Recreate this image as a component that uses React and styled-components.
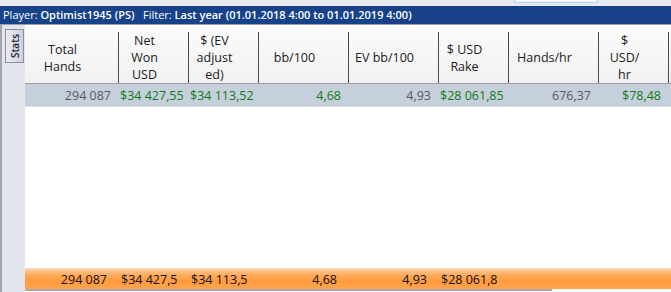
import React from 'react';
import styled, { createGlobalStyle } from 'styled-components';

const GlobalStyle = createGlobalStyle`
  html, body { margin: 0; padding: 0; background: #ffffff; }
  body { font-family: "Open Sans", "Noto Sans", sans-serif; }
`;

const columns = [
  { key: 'hands', label: ['Total', 'Hands'], width: 94 },
  { key: 'net', label: ['Net', 'Won', 'USD'], width: 70 },
  { key: 'ev', label: ['$ (EV', 'adjust', 'ed)'], width: 70 },
  { key: 'bb', label: ['bb/100'], width: 90 },
  { key: 'evbb', label: ['EV bb/100'], width: 90 },
  { key: 'rake', label: ['$ USD', 'Rake'], width: 70 },
  { key: 'hph', label: ['Hands/hr'], width: 90 },
  { key: 'usdhr', label: ['$', 'USD/', 'hr'], width: 70 },
];

const gridTemplate = columns.map(c => `${c.width}px`).join(' ') + ' 1fr';

const row = {
  hands: { text: '294 087', tone: 'gray' },
  net: { text: '$34 427,55', tone: 'green' },
  ev: { text: '$34 113,52', tone: 'green' },
  bb: { text: '4,68', tone: 'green' },
  evbb: { text: '4,93', tone: 'gray' },
  rake: { text: '$28 061,85', tone: 'green' },
  hph: { text: '676,37', tone: 'gray' },
  usdhr: { text: '$78,48', tone: 'green' },
};

const totals = {
  hands: '294 087',
  net: '$34 427,55',
  ev: '$34 113,52',
  bb: '4,68',
  evbb: '4,93',
  rake: '$28 061,85',
  hph: '',
  usdhr: '',
};

const Window = styled.div`
  width: 671px;
  height: 292px;
  display: flex;
  flex-direction: column;
  overflow: hidden;
  background: #e8ebf0;
`;

const TopStrip = styled.div`
  height: 6px;
  background: #e6e9ee;
  display: flex;
  padding-left: 514px;
  box-sizing: border-box;
`;

const StripTab = styled.div`
  width: 84px;
  height: 3px;
  background: #f4f8fc;
  border: 1px solid #b8cfe8;
  border-top: none;
  box-sizing: border-box;
`;

const TitleBar = styled.div`
  height: 18px;
  background: #17428a;
  color: #ffffff;
  font-size: 11px;
  line-height: 18px;
  padding-left: 3px;
  white-space: nowrap;
  border-bottom: 1px solid #9aa0a8;
`;

const Strong = styled.span`
  font-weight: 600;
`;

const Body = styled.div`
  flex: 1;
  display: flex;
  min-height: 0;
`;

const Sidebar = styled.div`
  width: 25px;
  flex-shrink: 0;
  background: #e3e6ec;
  border-left: 2px solid #a3a6ab;
  box-sizing: border-box;
  padding: 4px 0 0 3px;
`;

const SideTab = styled.div`
  width: 19px;
  height: 34px;
  box-sizing: border-box;
  border: 1px solid #8f8f9c;
  background: linear-gradient(to right, #ececf6, #cfcfe3);
  display: flex;
  align-items: center;
  justify-content: center;
`;

const SideLabel = styled.span`
  writing-mode: vertical-rl;
  transform: rotate(180deg);
  font-size: 10px;
  font-weight: 600;
  color: #222;
  line-height: 1;
`;

const Main = styled.div`
  flex: 1;
  display: flex;
  flex-direction: column;
  padding-top: 2px;
  background: #ffffff;
  min-width: 0;
`;

const HeaderRow = styled.div`
  display: grid;
  grid-template-columns: ${gridTemplate};
  height: 57px;
  box-sizing: border-box;
  padding: 5px 0 3px;
  background: linear-gradient(to bottom, #fbfbfb, #f1f1f1);
  border-bottom: 1px solid #9c9c9c;
`;

const HeaderCell = styled.div`
  display: flex;
  flex-direction: column;
  align-items: center;
  justify-content: center;
  padding-right: 18px;
  border-right: ${p => (p.last ? 'none' : '1px solid #4a4a4a')};
  font-size: 12.5px;
  line-height: 17px;
  color: #1a1a1a;
  white-space: nowrap;
`;

const DataRow = styled.div`
  display: grid;
  grid-template-columns: ${gridTemplate};
  height: 22px;
  background: #c5d0dc;
  border-bottom: 1px solid #d8dee6;
  align-items: center;
`;

const DataCell = styled.div`
  text-align: right;
  padding: 0 8px 0 1px;
  font-size: 12.5px;
  white-space: nowrap;
  color: ${p => (p.tone === 'green' ? '#137a13' : '#5a5a5a')};
`;

const Filler = styled.div`
  flex: 1;
  background: #ffffff;
`;

const FooterRow = styled.div`
  display: grid;
  grid-template-columns: ${gridTemplate};
  height: 20px;
  align-items: center;
  background: linear-gradient(
    to bottom,
    #ffcfa0 0%,
    #ffab5c 30%,
    #ff9a3c 60%,
    #ffa650 100%
  );
  border-top: 1px solid #f3dcc4;
`;

const FooterCell = styled.div`
  padding: 0 12px 0 2px;
  min-width: 0;
`;

const Clip = styled.span`
  display: block;
  overflow: hidden;
  white-space: nowrap;
  text-align: right;
  font-size: 12.5px;
  color: #111;
`;

const ScrollTrack = styled.div`
  height: 3px;
  background: #ffffff;
  display: flex;
`;

const ScrollThumb = styled.div`
  width: 527px;
  height: 2px;
  background: #a8a8a8;
`;

export default function App() {
  return (
    <>
      <GlobalStyle />
      <Window>
        <TopStrip>
          <StripTab />
        </TopStrip>
        <TitleBar>
          Player: <Strong>Optimist1945 (PS)</Strong>&nbsp;&nbsp; Filter: <Strong>Last year (01.01.2018 4:00 to 01.01.2019 4:00)</Strong>
        </TitleBar>
        <Body>
          <Sidebar>
            <SideTab>
              <SideLabel>Stats</SideLabel>
            </SideTab>
          </Sidebar>
          <Main>
            <HeaderRow>
              {columns.map(col => (
                <HeaderCell key={col.key}>
                  {col.label.map(line => (
                    <span key={line}>{line}</span>
                  ))}
                </HeaderCell>
              ))}
              <HeaderCell last />
            </HeaderRow>
            <DataRow>
              {columns.map(col => (
                <DataCell key={col.key} tone={row[col.key].tone}>
                  {row[col.key].text}
                </DataCell>
              ))}
              <div />
            </DataRow>
            <Filler />
            <FooterRow>
              {columns.map(col => (
                <FooterCell key={col.key}>
                  <Clip>{totals[col.key]}</Clip>
                </FooterCell>
              ))}
              <div />
            </FooterRow>
            <ScrollTrack>
              <ScrollThumb />
            </ScrollTrack>
          </Main>
        </Body>
      </Window>
    </>
  );
}
